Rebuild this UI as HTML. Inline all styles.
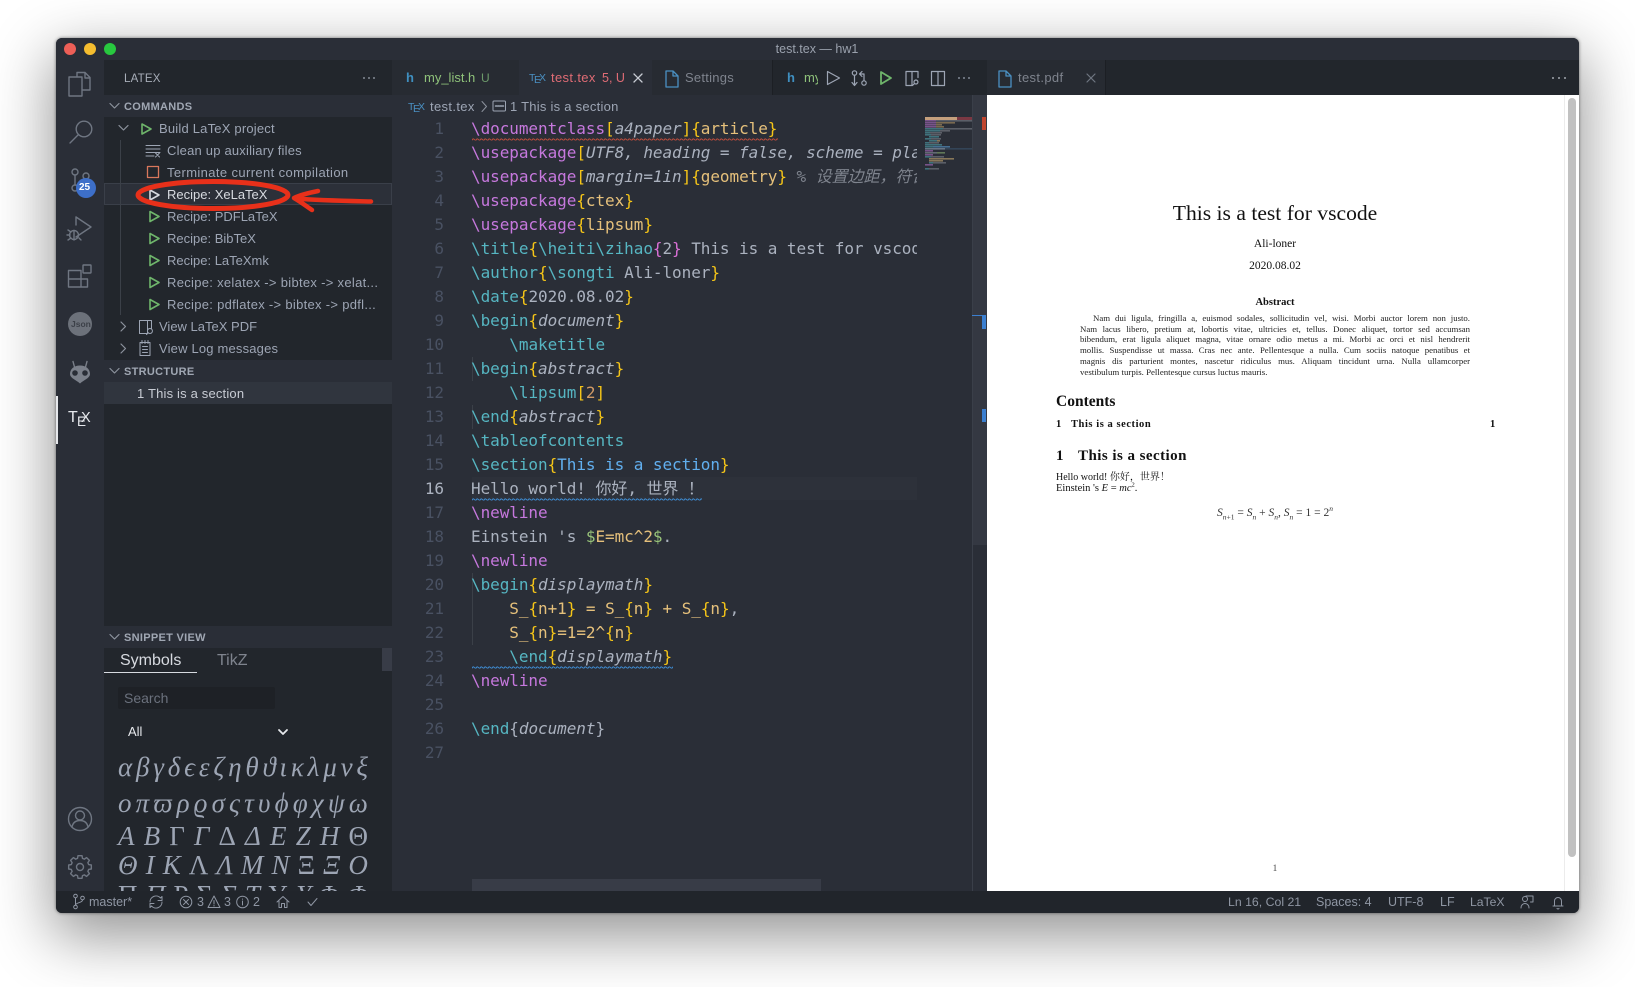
<!DOCTYPE html>
<html><head><meta charset="utf-8"><title>test.tex — hw1</title>
<style>
html,body{margin:0;padding:0;background:#fff;width:1635px;height:987px;overflow:hidden}
body{font-family:"Liberation Sans","Noto Sans CJK SC",sans-serif;position:relative}
.b{position:absolute}
.t{position:absolute;white-space:nowrap;line-height:20px;height:20px;font-size:13px;color:#9da5b4}
.code,.nums{position:absolute;top:117px;font-family:"DejaVu Sans Mono","Noto Sans CJK SC",monospace;font-size:16px;line-height:24px;letter-spacing:-.06px;white-space:pre;color:#abb2bf}
.nums{left:410px;width:34px;text-align:right;color:#495162}
.nums b{font-weight:400;color:#abb2bf}
.code{left:471px;width:446px;height:700px;overflow:hidden}
.p{color:#c678dd}.c{color:#56b6c2}.y{color:#f5c518}.o{color:#e5c07b}.i{font-style:italic}.u{color:#61afef}.g{color:#98c379}.m{color:#da70d6}.r{color:#d19a66}.k{color:#7f848e;font-style:italic}
.s{font-family:"Liberation Serif","Noto Serif CJK SC",serif;color:#111;position:absolute;white-space:nowrap;line-height:14px;height:14px}
.j{position:absolute;left:1080px;width:390px;height:11px;line-height:11px;font-family:"Liberation Serif",serif;font-size:8.75px;color:#222;text-align:justify;text-align-last:justify;overflow:hidden}
.gk{position:absolute;left:118px;width:250px;display:flex;justify-content:space-between;font-family:"Liberation Serif","DejaVu Serif",serif;font-size:27px;line-height:34px;height:34px;color:#9da5b4;font-style:italic}
.gk s{text-decoration:none;font-style:normal}
.sec{font-size:11px;font-weight:700;color:#a0a7b3;letter-spacing:.3px}
</style></head><body>
<!-- window -->
<div class="b" style="left:56px;top:38px;width:1523px;height:875px;border-radius:6px;background:#2a2e37;box-shadow:0 20px 60px 4px rgba(0,0,0,.42),0 0 3px rgba(0,0,0,.5)"></div>
<div class="b" style="left:56px;top:38px;width:1523px;height:875px;border-radius:6px;overflow:hidden">
 <div class="b" style="left:0;top:0;width:1523px;height:22px;background:#2a2e37"></div>
 <div class="b" style="left:0;top:22px;width:48px;height:831px;background:#2a2e37"></div>
 <div class="b" style="left:48px;top:22px;width:288px;height:831px;background:#22262c"></div>
 <div class="b" style="left:48px;top:57px;width:288px;height:22px;background:#2a2e37"></div>
 <div class="b" style="left:48px;top:322px;width:288px;height:22px;background:#2a2e37"></div>
 <div class="b" style="left:48px;top:588px;width:288px;height:22px;background:#2a2e37"></div>
 <div class="b" style="left:48px;top:344px;width:288px;height:22px;background:#30353e"></div>
 <div class="b" style="left:48px;top:145px;width:288px;height:22px;background:#2c3039;box-sizing:border-box;border:1px solid #3a3f49"></div>
 <!-- tab bar -->
 <div class="b" style="left:336px;top:22px;width:1187px;height:35px;background:#22262c"></div>
 <div class="b" style="left:336px;top:22px;width:127px;height:35px;background:#272b32"></div>
 <div class="b" style="left:463px;top:22px;width:133px;height:35px;background:#2a2e37"></div>
 <div class="b" style="left:596px;top:22px;width:120px;height:35px;background:#272b32"></div>
 <div class="b" style="left:931px;top:22px;width:118px;height:35px;background:#272b32"></div>
 <div class="b" style="left:716px;top:22px;width:1px;height:35px;background:#1c1f24"></div>
 <div class="b" style="left:1049px;top:22px;width:1px;height:35px;background:#1c1f24"></div>
 <!-- status -->
 <div class="b" style="left:0;top:853px;width:1523px;height:22px;background:#21252b"></div>
 <!-- pdf -->
 <div class="b" style="left:931px;top:57px;width:592px;height:796px;background:#fff"></div>
 <div class="b" style="left:1508px;top:57px;width:1px;height:796px;background:#ececec"></div>
 <div class="b" style="left:1512px;top:60px;width:8px;height:759px;border-radius:4px;background:#c1c1c1"></div>
 <!-- editor details -->
 <div class="b" style="left:416px;top:439px;width:445px;height:23px;background:#2d313a"></div>
 <div class="b" style="left:416px;top:841px;width:349px;height:12px;background:#383c47"></div>
 <div class="b" style="left:916px;top:57px;width:15px;height:450px;background:#343842"></div>
 <div class="b" style="left:916px;top:57px;width:1px;height:796px;background:#3a3f49"></div>
 <div class="b" style="left:926px;top:79px;width:4px;height:13px;background:#c0452f"></div>
 <div class="b" style="left:926px;top:371px;width:4px;height:13px;background:#3b7fd0"></div>
 <div class="b" style="left:926px;top:278px;width:4px;height:13px;background:#3b7fd0"></div>
 <div class="b" style="left:916px;top:277px;width:14px;height:1px;background:#3b7fd0"></div>
 <!-- indent guides -->
 <div class="b" style="left:416px;top:319px;width:1px;height:24px;background:#3b4048"></div>
 <div class="b" style="left:416px;top:367px;width:1px;height:24px;background:#3b4048"></div>
 <div class="b" style="left:416px;top:535px;width:1px;height:72px;background:#3b4048"></div>
 <div class="b" style="left:64px;top:102px;width:1px;height:175px;background:#3b4048"></div>
 <!-- snippet details -->
 <div class="b" style="left:48px;top:634px;width:93px;height:1px;background:#d7dae0"></div>
 <div class="b" style="left:326px;top:610px;width:10px;height:23px;background:#383c47"></div>
 <div class="b" style="left:62px;top:649px;width:157px;height:22px;background:#1e2126;border-radius:2px"></div>
 <!-- activity indicator -->
 <div class="b" style="left:0;top:358px;width:2px;height:48px;background:#e6e8ec"></div>
</div>

<!-- title -->
<div class="t" style="left:717px;width:200px;text-align:center;top:39px;font-size:12.5px;color:#9aa1ad">test.tex — hw1</div>

<!-- sidebar text -->
<div class="t" style="left:124px;top:69px;font-size:11.5px;color:#a8aeb9;letter-spacing:.2px">LATEX</div>
<div class="t sec" style="left:124px;top:96.500px">COMMANDS</div>
<div class="t" style="left:159px;top:119px;letter-spacing:.2px">Build LaTeX project</div>
<div class="t" style="left:167px;top:141px;letter-spacing:.2px">Clean up auxiliary files</div>
<div class="t" style="left:167px;top:163px;letter-spacing:.38px">Terminate current compilation</div>
<div class="t" style="left:167px;top:185px;color:#d7dae0">Recipe: XeLaTeX</div>
<div class="t" style="left:167px;top:207px">Recipe: PDFLaTeX</div>
<div class="t" style="left:167px;top:229px">Recipe: BibTeX</div>
<div class="t" style="left:167px;top:251px">Recipe: LaTeXmk</div>
<div class="t" style="left:167px;top:273px;letter-spacing:.3px">Recipe: xelatex -&gt; bibtex -&gt; xelat...</div>
<div class="t" style="left:167px;top:295px;letter-spacing:.3px">Recipe: pdflatex -&gt; bibtex -&gt; pdfl...</div>
<div class="t" style="left:159px;top:317px">View LaTeX PDF</div>
<div class="t" style="left:159px;top:339px;letter-spacing:.18px">View Log messages</div>
<div class="t sec" style="left:124px;top:361.500px">STRUCTURE</div>
<div class="t" style="left:137px;top:384px;color:#c8ccd4;letter-spacing:.18px">1 This is a section</div>
<div class="t sec" style="left:124px;top:627.500px">SNIPPET VIEW</div>
<div class="t" style="left:120px;top:651px;font-size:16px;color:#d7dae0">Symbols</div>
<div class="t" style="left:217px;top:651px;font-size:16px;color:#7f848e">TikZ</div>
<div class="t" style="left:124px;top:688px;font-size:14px;color:#6b717d">Search</div>
<div class="t" style="left:128px;top:722px;color:#e6e8ec">All</div>
<div class="gk" style="top:750px"><span>α</span><span>β</span><span>γ</span><span>δ</span><span>ϵ</span><span>ε</span><span>ζ</span><span>η</span><span>θ</span><span>ϑ</span><span>ι</span><span>κ</span><span>λ</span><span>μ</span><span>ν</span><span>ξ</span></div>
<div class="gk" style="top:786px"><span>o</span><span>π</span><span>ϖ</span><span>ρ</span><span>ϱ</span><span>σ</span><span>ς</span><span>τ</span><span>υ</span><span>ϕ</span><span>φ</span><span>χ</span><span>ψ</span><span>ω</span></div>
<div class="gk" style="top:819px"><span>A</span><span>B</span><s>Γ</s><span>Γ</span><s>Δ</s><span>Δ</span><span>E</span><span>Z</span><span>H</span><s>Θ</s></div>
<div class="gk" style="top:848px"><span>Θ</span><span>I</span><span>K</span><s>Λ</s><span>Λ</span><span>M</span><span>N</span><s>Ξ</s><span>Ξ</span><span>O</span></div>
<div class="b" style="left:104px;top:880px;width:288px;height:11px;overflow:hidden"><div class="gk" style="left:14px;top:-2px;"><s>Π</s><span>Π</span><s>Ρ</s><s>Σ</s><span>Σ</span><span>Τ</span><s>Υ</s><span>Υ</span><s>Φ</s><span>Φ</span></div></div>

<!-- tabs -->
<div class="t" style="left:406px;top:68px;font-weight:700;color:#3f8fc0;font-size:13px">h</div>
<div class="t" style="left:424px;top:68px;color:#8fc27a">my_list.h</div>
<div class="t" style="left:481px;top:68px;color:#6c9a6a;font-size:12px">U</div>
<div class="t" style="left:551px;top:68px;color:#e06c75;letter-spacing:.35px">test.tex</div>
<div class="t" style="left:602px;top:68px;color:#e06c75;font-size:12.5px">5, U</div>
<div class="t" style="left:685px;top:68px;color:#7f848e;letter-spacing:.25px">Settings</div>
<div class="t" style="left:787px;top:68px;font-weight:700;color:#3f8fc0">h</div>
<div class="b" style="left:804px;top:68px;width:14px;height:20px;overflow:hidden"><div class="t" style="left:0;top:0;color:#8fc27a">my_</div></div>
<div class="t" style="left:1018px;top:68px;color:#7f848e;letter-spacing:.35px">test.pdf</div>

<!-- breadcrumb -->
<div class="t" style="left:430px;top:97px;color:#9da5b4;letter-spacing:.35px">test.tex</div>
<div class="t" style="left:510px;top:97px;color:#9da5b4;letter-spacing:.25px">1 This is a section</div>

<!-- line numbers -->
<div class="nums">1
2
3
4
5
6
7
8
9
10
11
12
13
14
15
<b>16</b>
17
18
19
20
21
22
23
24
25
26
27</div>

<div class="code"><span class="p">\documentclass</span><span class="y">[</span><span class="i">a4paper</span><span class="y">]{</span><span class="o">article</span><span class="y">}</span>
<span class="p">\usepackage</span><span class="y">[</span><span class="i">UTF8, heading = false, scheme = plain</span><span class="y">]</span>
<span class="p">\usepackage</span><span class="y">[</span><span class="i">margin=1in</span><span class="y">]{</span><span class="o">geometry</span><span class="y">}</span> <span class="k">% 设置边距，符合规范</span>
<span class="p">\usepackage</span><span class="y">{</span><span class="o">ctex</span><span class="y">}</span>
<span class="p">\usepackage</span><span class="y">{</span><span class="o">lipsum</span><span class="y">}</span>
<span class="c">\title</span><span class="y">{</span><span class="c">\heiti\zihao</span><span class="m">{</span>2<span class="m">}</span> This is a test for vscode<span class="y">}</span>
<span class="c">\author</span><span class="y">{</span><span class="c">\songti</span> Ali-loner<span class="y">}</span>
<span class="c">\date</span><span class="y">{</span>2020.08.02<span class="y">}</span>
<span class="c">\begin</span><span class="y">{</span><span class="i">document</span><span class="y">}</span>
    <span class="c">\maketitle</span>
<span class="c">\begin</span><span class="y">{</span><span class="i">abstract</span><span class="y">}</span>
    <span class="c">\lipsum</span><span class="y">[</span><span class="r">2</span><span class="y">]</span>
<span class="c">\end</span><span class="y">{</span><span class="i">abstract</span><span class="y">}</span>
<span class="c">\tableofcontents</span>
<span class="c">\section</span><span class="y">{</span><span class="u">This is a section</span><span class="y">}</span>
Hello world! 你好, 世界 ！
<span class="p">\newline</span>
Einstein 's <span class="g">$</span><span class="o">E=mc^2</span><span class="g">$</span>.
<span class="p">\newline</span>
<span class="c">\begin</span><span class="y">{</span><span class="i">displaymath</span><span class="y">}</span>
    <span class="o">S_</span><span class="y">{</span><span class="o">n+1</span><span class="y">}</span> <span class="o">=</span> <span class="o">S_</span><span class="y">{</span><span class="o">n</span><span class="y">}</span> <span class="o">+</span> <span class="o">S_</span><span class="y">{</span><span class="o">n</span><span class="y">}</span>,
    <span class="o">S_</span><span class="y">{</span><span class="o">n</span><span class="y">}</span><span class="o">=1=2^</span><span class="y">{</span><span class="o">n</span><span class="y">}</span>
    <span class="c">\end</span><span class="y">{</span><span class="i">displaymath</span><span class="y">}</span>
<span class="p">\newline</span>

<span class="c">\end</span>{<span class="i">document</span>}
</div>

<!-- PDF -->
<div class="s" style="left:1075px;width:400px;text-align:center;top:204px;line-height:18px;height:18px;font-size:21.600px">This is a test for vscode</div>
<div class="s" style="left:1075px;width:400px;text-align:center;top:237px;font-size:11.500px">Ali-loner</div>
<div class="s" style="left:1075px;width:400px;text-align:center;top:259px;font-size:11.500px">2020.08.02</div>
<div class="s" style="left:1075px;width:400px;text-align:center;top:296px;font-size:10.500px;font-weight:700">Abstract</div>
<div class="j" style="left:1093px;width:377px;top:313px">Nam dui ligula, fringilla a, euismod sodales, sollicitudin vel, wisi. Morbi auctor lorem non justo.</div>
<div class="j" style="top:324px">Nam lacus libero, pretium at, lobortis vitae, ultricies et, tellus. Donec aliquet, tortor sed accumsan</div>
<div class="j" style="top:334px">bibendum, erat ligula aliquet magna, vitae ornare odio metus a mi. Morbi ac orci et nisl hendrerit</div>
<div class="j" style="top:345px">mollis. Suspendisse ut massa. Cras nec ante. Pellentesque a nulla. Cum sociis natoque penatibus et</div>
<div class="j" style="top:356px">magnis dis parturient montes, nascetur ridiculus mus. Aliquam tincidunt urna. Nulla ullamcorper</div>
<div class="s" style="left:1080px;top:365px;font-size:8.850px;color:#222">vestibulum turpis. Pellentesque cursus luctus mauris.</div>
<div class="s" style="left:1056px;top:395px;font-size:15.500px;font-weight:700">Contents</div>
<div class="s" style="left:1056px;top:418px;font-size:10.500px;font-weight:700">1</div>
<div class="s" style="left:1071px;top:418px;font-size:10.500px;font-weight:700;letter-spacing:.55px">This is a section</div>
<div class="s" style="left:1490px;top:418px;font-size:10.500px;font-weight:700">1</div>
<div class="s" style="left:1056px;top:449px;font-size:15px;font-weight:700">1</div>
<div class="s" style="left:1078px;top:449px;font-size:15px;font-weight:700;letter-spacing:.45px">This is a section</div>
<div class="s" style="left:1056px;top:471px;font-size:10px">Hello world! 你好，世界！</div>
<div class="s" style="left:1056px;top:482px;font-size:10.500px">Einstein 's <i>E</i> = <i>mc</i><sup style="font-size:6.500px;line-height:0">2</sup>.</div>
<div class="s" style="left:1075px;width:400px;text-align:center;top:506px;font-size:11.500px;color:#333"><i>S</i><sub style="font-size:7.500px;line-height:0"><i>n</i>+1</sub> = <i>S</i><sub style="font-size:7.500px;line-height:0"><i>n</i></sub> + <i>S</i><sub style="font-size:7.500px;line-height:0"><i>n</i></sub>, <i>S</i><sub style="font-size:7.500px;line-height:0"><i>n</i></sub> = 1 = 2<sup style="font-size:7.500px;line-height:0"><i>n</i></sup></div>
<div class="s" style="left:1075px;width:400px;text-align:center;top:862px;font-size:9.300px;color:#444">1</div>

<!-- status text -->
<div class="t" style="left:89px;top:892px;font-size:12.5px;color:#8f96a3">master*</div>
<div class="t" style="left:197px;top:892px;font-size:12.5px;color:#8f96a3">3</div>
<div class="t" style="left:224px;top:892px;font-size:12.5px;color:#8f96a3">3</div>
<div class="t" style="left:253px;top:892px;font-size:12.5px;color:#8f96a3">2</div>
<div class="t" style="left:1228px;top:892px;font-size:12.3px;color:#8f96a3">Ln 16, Col 21</div>
<div class="t" style="left:1316px;top:892px;font-size:12.5px;color:#8f96a3">Spaces: 4</div>
<div class="t" style="left:1388px;top:892px;font-size:12.5px;color:#8f96a3">UTF-8</div>
<div class="t" style="left:1440px;top:892px;font-size:12.5px;color:#8f96a3">LF</div>
<div class="t" style="left:1470px;top:892px;font-size:12.2px;color:#8f96a3">LaTeX</div>

<!-- TeX wordmarks -->
<div class="t" style="left:68px;top:408px;font-size:16px;color:#e6e8ec">T</div><div class="t" style="left:77px;top:412px;font-size:13.500px;color:#e6e8ec">E</div><div class="t" style="left:81px;top:408px;font-size:14.500px;color:#e6e8ec;margin-left:0">X</div>
<div class="t" style="left:529px;top:68px;font-size:10.5px;color:#4a90c2">T</div><div class="t" style="left:534px;top:70px;font-size:10.5px;color:#4a90c2">E</div><div class="t" style="left:539px;top:68px;font-size:10.5px;color:#4a90c2">X</div>
<div class="t" style="left:408px;top:97px;font-size:10.5px;color:#4a90c2">T</div><div class="t" style="left:413px;top:99px;font-size:10.5px;color:#4a90c2">E</div><div class="t" style="left:418px;top:97px;font-size:10.5px;color:#4a90c2">X</div>
<div class="t" style="left:71px;top:314px;font-size:8.500px;font-weight:700;color:#3c4048;z-index:5">Json</div>
<div class="t" style="left:79px;top:178px;font-size:10px;font-weight:700;color:#fff;z-index:5">25</div>

<!-- icons -->
<svg class="b" style="left:0;top:0" width="1635" height="987" viewBox="0 0 1635 987" fill="none" stroke-linecap="round" stroke-linejoin="round">
 <defs>
  <pattern id="wr" width="4" height="3" patternUnits="userSpaceOnUse"><path d="M0 2.2Q1 .2 2 1.2T4 2.2" stroke="#c24d3c" stroke-width=".9" fill="none"/></pattern>
  <pattern id="wb" width="4" height="3" patternUnits="userSpaceOnUse"><path d="M0 2.2Q1 .2 2 1.2T4 2.2" stroke="#3f8fd8" stroke-width=".9" fill="none"/></pattern>
 </defs>
 <!-- window lights -->
 <circle cx="70" cy="49" r="6" fill="#ed5f57"/><circle cx="90" cy="49" r="6" fill="#f5bd2f"/><circle cx="110" cy="49" r="6" fill="#28c83f"/>
 <!-- squiggles -->
 <rect x="472" y="137.5" width="306" height="3" fill="url(#wr)"/>
 <rect x="472" y="497.5" width="230" height="3" fill="url(#wb)"/>
 <rect x="472" y="666" width="201" height="3" fill="url(#wb)"/>
 <!-- activity -->
 <g stroke="#6f7682" stroke-width="1.4">
  <path d="M77 77V72.5h8l5 5V90h-8M77 77h-8v19h13V77zM85 72.5V78h5"/>
  <circle cx="84" cy="129" r="7.8"/><path d="M78 135L70 143"/>
  <circle cx="75" cy="172" r="3"/><circle cx="86" cy="176" r="3"/><circle cx="75" cy="188" r="3"/><path d="M75 175V185M86 179C86 183 78 182 77 186"/>
  <path d="M76 217L91 227L76 237M76 217V225"/><circle cx="74" cy="235" r="4.5"/><path d="M68 230L71 232M68 240L71 238M67 235H70M74 230.5V240M79 238L81 240"/>
  <path d="M68.5 270.5H81V287H68.5zM68.5 279H87.5V287H81M81 270.5V279"/><rect x="83" y="265" width="8" height="8" rx=".5"/>
  <circle cx="80" cy="819" r="11.5"/><circle cx="80" cy="815.5" r="4.5"/><path d="M72 827c1-5 4-6.5 8-6.5s7 1.500 8 6.500"/>
 </g>
 <circle cx="86" cy="188" r="10" fill="#3d6fc9"/>
 <circle cx="80" cy="324" r="12" fill="#6c717a"/>
 <!-- alien -->
 <path d="M74.500 367L73 361.500M85.500 367L87 361.500" stroke="#7b808a" stroke-width="1.4"/>
 <path d="M80 365.500c-6 0-10 3.500-10 8.500c0 4 5.500 5.500 10 9.500c4.500-4 10-5.500 10-9.500c0-5-4-8.500-10-8.500z" fill="#7b808a"/>
 <circle cx="75" cy="373" r="2.800" fill="#2a2e37"/><circle cx="85" cy="373" r="2.800" fill="#2a2e37"/>
 <!-- gear -->
 <g transform="translate(80 867)" stroke="#6f7682" stroke-width="1.4">
  <path d="M-2.480-8.650L-2-11.330H2L2.480-8.650L4.360-7.870L6.600-9.420L9.420-6.600L7.870-4.360L8.650-2.480L11.330-2V2L8.650 2.480L7.870 4.360L9.420 6.600L6.600 9.420L4.360 7.870L2.480 8.650L2 11.330H-2L-2.480 8.650L-4.360 7.870L-6.600 9.420L-9.420 6.600L-7.870 4.360L-8.650 2.480L-11.330 2V-2L-8.650-2.480L-7.870-4.360L-9.420-6.600L-6.600-9.420L-4.360-7.870Z"/>
  <circle r="3.500"/>
 </g>
 <!-- sidebar chevrons -->
 <g stroke="#8c929d" stroke-width="1.2">
  <path d="M110 103.500l4.500 4.500 4.500-4.500M119 125.500l4.500 4.500 4.500-4.500M110 368.500l4.500 4.500 4.500-4.500M110 634.500l4.500 4.500 4.500-4.500"/>
  <path d="M121 322l4.500 4.500-4.500 4.500M121 344l4.500 4.500-4.500 4.500"/>
 </g>
 <circle cx="364" cy="78" r=".9" fill="#a0a7b3"/><circle cx="369" cy="78" r=".9" fill="#a0a7b3"/><circle cx="374" cy="78" r=".9" fill="#a0a7b3"/>
 <!-- sidebar icons -->
 <g stroke="#6fb56b" stroke-width="1.600">
  <path d="M142 124l9 5-9 5zM150 211.500l9 5-9 5zM150 233.500l9 5-9 5zM150 255.500l9 5-9 5zM150 277.500l9 5-9 5zM150 299.500l9 5-9 5z"/>
 </g>
 <path d="M150 190l9 5-9 5z" stroke="#d7dae0" stroke-width="1.600"/>
 <path d="M146 145.500h14M146 149h14M146 152.500h14M146 156h8M155.500 153l4 4M159.500 153l-4 4" stroke="#9da5b4" stroke-width="1"/>
 <rect x="147.500" y="166.500" width="11" height="11" stroke="#d9775c" stroke-width="1.300"/>
 <path d="M139.500 320.500h8v13h-8zM147.500 320.500h4v8M150 328.500a2.500 2.500 0 1 1-.1 0M148 333l-1.500 1.500" stroke="#9da5b4" stroke-width="1"/>
 <path d="M140 342.500h10v13h-10zM142 340.500v3M145 340.500v3M148 340.500v3M142.500 346.500h5M142.500 349.500h5M142.500 352.500h5" stroke="#9da5b4" stroke-width="1"/>
 <path d="M279 730l4 4 4-4" stroke="#e6e8ec" stroke-width="1.800"/>
 <!-- tab icons -->
 <path d="M666 71h7l5 5v11h-12zM673 71v5h5" stroke="#4a90c2" stroke-width="1.300"/>
 <path d="M999 71h7l5 5v11h-12zM1006 71v5h5" stroke="#4a90c2" stroke-width="1.300"/>
 <path d="M634 74l8 8M642 74l-8 8" stroke="#c8ccd4" stroke-width="1.300"/>
 <path d="M1087 74l8 8M1095 74l-8 8" stroke="#6f7682" stroke-width="1.200"/>
 <path d="M827.500 71.500l12 6.500-12 6.500z" stroke="#9da5b4" stroke-width="1.200"/>
 <g stroke="#9da5b4" stroke-width="1.200"><circle cx="854.500" cy="73" r="2.200"/><circle cx="864" cy="83" r="2.200"/><path d="M854.500 75.500V85M852 82.500l2.500 3 2.500-3M864 80.500V74h-4M862 71.500l-2.500 2.500 2.500 2.500"/>
  <path d="M906 71.500h6v14h-6zM912 71.500h6v6M916 80a2 2 0 1 1-.1 0M914.500 83.500l-2 2"/>
  <path d="M931.500 71.500h13v14h-13zM938 71.500v14"/></g>
 <path d="M881 72l10 6-10 6z" stroke="#6fb56b" stroke-width="1.800"/>
 <circle cx="959" cy="78" r=".9" fill="#9da5b4"/><circle cx="964" cy="78" r=".9" fill="#9da5b4"/><circle cx="969" cy="78" r=".9" fill="#9da5b4"/>
 <circle cx="1553" cy="78" r=".9" fill="#c8ccd4"/><circle cx="1559" cy="78" r=".9" fill="#c8ccd4"/><circle cx="1565" cy="78" r=".9" fill="#c8ccd4"/>
 <!-- breadcrumb icons -->
 <path d="M482 101.500l4.500 5-4.500 5" stroke="#8c929d" stroke-width="1"/>
 <rect x="493" y="101" width="12.500" height="10" rx="1" stroke="#9da5b4" stroke-width="1"/><path d="M495.500 106h8" stroke="#9da5b4" stroke-width="1.500" stroke-dasharray="1.500 .8"/>
 <!-- status icons -->
 <g stroke="#8f96a3" stroke-width="1">
  <circle cx="75.500" cy="896" r="1.800"/><circle cx="75.500" cy="907" r="1.800"/><circle cx="82.500" cy="898" r="1.800"/><path d="M75.500 898v7M82.500 900c0 3-6 2-7 5"/>
  <path d="M150 902a6 6 0 0 1 10.500-4l1.500-1.500v4h-4M162 902a6 6 0 0 1-10.500 4l-1.500 1.500v-4h4"/>
  <circle cx="186" cy="902" r="5.800"/><path d="M183.500 899.500l5 5M188.500 899.500l-5 5"/>
  <path d="M214 896l6 11.500h-12zM214 900.500v3.500M214 905.500v.5"/>
  <circle cx="242.500" cy="902" r="5.800"/><path d="M242.500 901v4M242.500 899v.3"/>
  <path d="M277 902l6-5.500 6 5.500M279 901v6.500h2.500v-4h3v4h2.500V901"/>
  <path d="M308 902l3 3.500 6-7"/>
  <circle cx="1525" cy="899" r="2.500"/><path d="M1521 908c0-3 2-4.500 4-4.500s4 1.500 4 4.500M1526 896h7v6h-2.500"/>
  <path d="M1553 906h10M1554.500 906v-5a3.500 3.500 0 0 1 7 0v5M1557 908.500a1.500 1.500 0 0 0 2 0"/>
 </g>
 <!-- minimap -->
 <g fill-opacity=".5">
  <rect x="925" y="117" width="32" height="3" fill="#e0b48a" fill-opacity=".85"/><rect x="957" y="117" width="15" height="3" fill="#8a3a45" fill-opacity=".85"/>
  <g>
  <rect x="925" y="120" width="11" height="1.600" fill="#c678dd"/><rect x="936" y="120" width="36" height="1.600" fill="#8b8f99"/>
  <rect x="925" y="122" width="11" height="1.600" fill="#c678dd"/><rect x="936" y="122" width="19" height="1.600" fill="#c9a66a"/>
  <rect x="925" y="124" width="11" height="1.600" fill="#c678dd"/><rect x="936" y="124" width="6" height="1.600" fill="#c9a66a"/>
  <rect x="925" y="126" width="11" height="1.600" fill="#c678dd"/><rect x="936" y="126" width="8" height="1.600" fill="#c9a66a"/>
  <rect x="925" y="128" width="18" height="1.600" fill="#56b6c2"/><rect x="943" y="128" width="29" height="1.600" fill="#8b8f99"/>
  <rect x="925" y="130" width="15" height="1.600" fill="#56b6c2"/><rect x="940" y="130" width="10" height="1.600" fill="#8b8f99"/>
  <rect x="925" y="132" width="5" height="1.600" fill="#56b6c2"/><rect x="930" y="132" width="12" height="1.600" fill="#8b8f99"/>
  <rect x="925" y="134" width="6" height="1.600" fill="#56b6c2"/><rect x="931" y="134" width="10" height="1.600" fill="#8b8f99"/>
  <rect x="929" y="136" width="10" height="1.600" fill="#56b6c2"/>
  <rect x="925" y="138" width="6" height="1.600" fill="#56b6c2"/><rect x="931" y="138" width="10" height="1.600" fill="#8b8f99"/>
  <rect x="929" y="140" width="8" height="1.600" fill="#56b6c2"/><rect x="937" y="140" width="3" height="1.600" fill="#e5c07b"/>
  <rect x="925" y="142" width="4" height="1.600" fill="#56b6c2"/><rect x="929" y="142" width="10" height="1.600" fill="#8b8f99"/>
  <rect x="925" y="144" width="17" height="1.600" fill="#56b6c2"/>
  <rect x="925" y="146" width="8" height="1.600" fill="#56b6c2"/><rect x="933" y="146" width="17" height="1.600" fill="#61afef"/>
  <rect x="925" y="148" width="47" height="1.600" fill="#3b5a78"/><rect x="925" y="148" width="20" height="1.600" fill="#9da5b4"/>
  <rect x="925" y="150" width="8" height="1.600" fill="#c678dd"/>
  <rect x="925" y="152" width="12" height="1.600" fill="#9da5b4"/><rect x="937" y="152" width="8" height="1.600" fill="#98c379"/>
  <rect x="925" y="154" width="8" height="1.600" fill="#c678dd"/>
  <rect x="925" y="156" width="6" height="1.600" fill="#56b6c2"/><rect x="931" y="156" width="13" height="1.600" fill="#8b8f99"/>
  <rect x="929" y="158" width="25" height="1.600" fill="#e5c07b"/>
  <rect x="929" y="160" width="14" height="1.600" fill="#e5c07b"/>
  <rect x="929" y="162" width="4" height="1.600" fill="#56b6c2"/><rect x="933" y="162" width="13" height="1.600" fill="#8b8f99"/>
  <rect x="925" y="164" width="8" height="1.600" fill="#c678dd"/>
  <rect x="925" y="168" width="4" height="1.600" fill="#56b6c2"/><rect x="929" y="168" width="10" height="1.600" fill="#8b8f99"/>
  </g>
 </g>
 <!-- red annotation -->
 <ellipse cx="213" cy="195" rx="75" ry="13.500" stroke="#e8301a" stroke-width="5"/>
 <path d="M371 201.500C350 201 320 200.500 296 198.500M318 191C308 193 300 195 294 198C301 202 306 206 312 210" stroke="#e8301a" stroke-width="4.500"/>
</svg>
</body></html>
